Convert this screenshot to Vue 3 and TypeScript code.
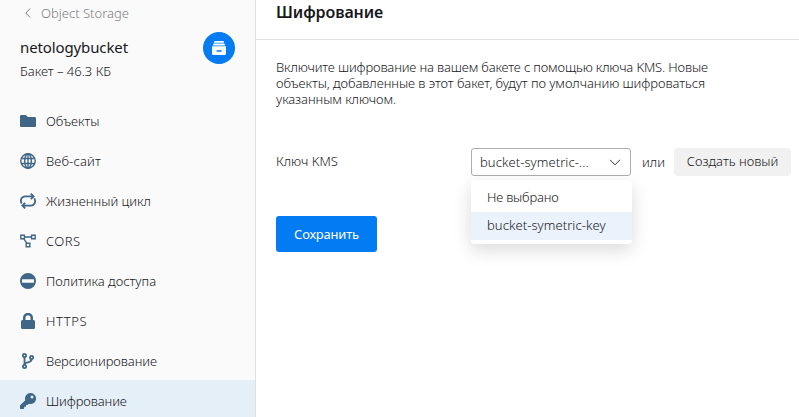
<script setup lang="ts">
import { computed, ref } from 'vue'

interface NavItem {
  id: string
  label: string
}

const navItems: NavItem[] = [
  { id: 'objects', label: 'Объекты' },
  { id: 'website', label: 'Веб-сайт' },
  { id: 'lifecycle', label: 'Жизненный цикл' },
  { id: 'cors', label: 'CORS' },
  { id: 'policy', label: 'Политика доступа' },
  { id: 'https', label: 'HTTPS' },
  { id: 'versioning', label: 'Версионирование' },
  { id: 'encryption', label: 'Шифрование' },
]

const active = ref('encryption')
const open = ref(true)
const selectedKey = ref('bucket-symetric-key')
const keys: string[] = ['Не выбрано', 'bucket-symetric-key']

const maxValueLength = 16
const selectedLabel = computed(() =>
  selectedKey.value.length > maxValueLength
    ? `${selectedKey.value.slice(0, maxValueLength)}...`
    : selectedKey.value,
)

const description: string[] = [
  'Включите шифрование на вашем бакете с помощью ключа KMS. Новые',
  'объекты, добавленные в этот бакет, будут по умолчанию шифроваться',
  'указанным ключом.',
]

function choose(key: string): void {
  selectedKey.value = key
  open.value = false
}
</script>

<template>
  <div class="page">
    <aside class="sidebar">
      <a class="back">
        <svg class="back-icon" viewBox="0 0 6 10"><path d="M5.2 .5 .8 5l4.400 4.500" /></svg>
        <span class="back-text">Object Storage</span>
      </a>
      <div class="bucket">
        <div class="bucket-info">
          <div class="bucket-name">netologybucket</div>
          <div class="bucket-size">Бакет – 46.3 КБ</div>
        </div>
        <div class="bucket-badge">
          <svg width="14" height="14" viewBox="0 0 14 14">
            <path d="M2.400 0h9.200l.5 1.700H1.900zM1.500 2.500h11l.6 2H.9z" fill="#fff" />
            <path fill-rule="evenodd" d="M0 5.300h14v7.500a1.200 1.200 0 0 1-1.200 1.200H1.200A1.200 1.200 0 0 1 0 12.800zM4.600 9.300v1.500h5V9.300z" fill="#fff" />
          </svg>
        </div>
      </div>
      <nav class="nav">
        <a
          v-for="item in navItems"
          :key="item.id"
          class="nav-item"
          :class="[`nav-${item.id}`, { active: active === item.id }]"
          @click="active = item.id"
        >
          <svg class="nav-icon" viewBox="0 0 16 16">
            <path v-if="item.id === 'objects'" class="fill" d="M1.300 2h4.500l2 2h6.900A1.300 1.300 0 0 1 16 5.300v7.400a1.300 1.300 0 0 1-1.300 1.300H1.300A1.300 1.300 0 0 1 0 12.700V3.300A1.300 1.300 0 0 1 1.300 2z" />
            <g v-else-if="item.id === 'website'" class="line">
              <circle cx="8" cy="8" r="7.200" />
              <ellipse cx="8" cy="8" rx="3.300" ry="7.200" />
              <path d="M8 .8v14.400M1.300 5.500h13.400M1.300 10.500h13.400" />
            </g>
            <g v-else-if="item.id === 'lifecycle'" class="line thick">
              <path d="M1.700 10.600C-.2 7 1.600 3.400 5 3.400h8M14.300 5.400c1.900 3.600.1 7.200-3.300 7.200H3" />
              <path d="m10.800.6 2.800 2.800-2.800 2.800M5.200 9.800l-2.800 2.800 2.800 2.800" />
            </g>
            <g v-else-if="item.id === 'cors'" class="line">
              <path d="M.8 2.300h3.600v3.500H.8zM11.600 2.300h3.600v3.500h-3.600zM6.200 10.200h3.600v3.500H6.200zM4.400 4h7.200M3.700 5.800l3.200 4.400" />
            </g>
            <path v-else-if="item.id === 'policy'" class="fill" d="M8 0a8 8 0 1 1 0 16A8 8 0 0 1 8 0zM2.600 6.200a.6.6 0 0 0-.6.6v2.300c0 .4.200.6.600.6h10.800c.4 0 .6-.2.600-.6V6.800c0-.4-.2-.6-.6-.6z" />
            <path v-else-if="item.id === 'https'" class="fill" d="M2.500 7H3V4.800a5 5 0 0 1 10 0V7h.5A1.500 1.500 0 0 1 15 8.500v6a1.500 1.500 0 0 1-1.500 1.500h-11A1.500 1.500 0 0 1 1 14.500v-6A1.500 1.500 0 0 1 2.500 7zM5.500 7h5V4.800a2.500 2.500 0 0 0-5 0z" />
            <g v-else-if="item.id === 'versioning'" class="line thick">
              <circle cx="4.500" cy="2.500" r="1.600" />
              <circle cx="4.500" cy="13.500" r="1.600" />
              <circle cx="11.600" cy="4.500" r="1.600" />
              <path d="M4.500 4.100v7.800M11.600 6.100c0 3.300-2.600 2.900-4.900 3.500-1.300.3-2.200.9-2.200 2.300" />
            </g>
            <path v-else class="fill" d="M10.500 0a5.500 5.500 0 1 1-1.700 10.700L7.500 12H6v1.800H4.200v1.500l-.7.700H.7a.7.700 0 0 1-.7-.7v-2.800l5.300-5.300A5.500 5.500 0 0 1 10.500 0zM12 2.500a1.500 1.500 0 1 0 0 3 1.500 1.500 0 0 0 0-3z" />
          </svg>
          <span class="nav-label">{{ item.label }}</span>
        </a>
      </nav>
    </aside>

    <main class="main">
      <header class="header"><h1 class="title">Шифрование</h1></header>
      <section class="content">
        <p class="description">
          <span v-for="(line, i) in description" :key="i" class="line-text" :class="`row-${i}`">{{ line }}</span>
        </p>
        <div class="field">
          <label class="field-label">Ключ KMS</label>
          <div class="select">
            <button class="select-control" type="button" @click="open = !open">
              <span class="select-value">{{ selectedLabel }}</span>
              <svg class="chevron" viewBox="0 0 12 7"><path d="m1 .8 5 5 5-5" /></svg>
            </button>
            <div v-if="open" class="menu">
              <div
                v-for="key in keys"
                :key="key"
                class="option"
                :class="{ chosen: key === selectedKey }"
                @click="choose(key)"
              >{{ key }}</div>
            </div>
          </div>
          <span class="or">или</span>
          <button class="create" type="button">Создать новый</button>
        </div>
        <button class="save" type="button">Сохранить</button>
      </section>
    </main>
  </div>
</template>

<style>
body {
  margin: 0;
  overflow: hidden;
}
</style>

<style scoped>
.page {
  display: flex;
  width: 100%;
  height: 417px;
  overflow: hidden;
  background: #fff;
  color: #17181b;
  font: 350 13px/16px "Noto Sans", "Open Sans", sans-serif;
  letter-spacing: 0;
  white-space: nowrap;
}
button {
  font: inherit;
  color: inherit;
  border: 0;
  margin: 0;
  padding: 0;
  letter-spacing: inherit;
}
.sidebar {
  box-sizing: border-box;
  flex: none;
  width: 256px;
  height: 417px;
  overflow: hidden;
  background: #fafafa;
  border-right: 1px solid #e0e0e0;
}
.back {
  display: flex;
  align-items: center;
  height: 25px;
  padding-left: 25px;
  color: #7d7d80;
}
.back-icon {
  width: 6px;
  height: 10px;
  margin-right: 10px;
  fill: none;
  stroke: #77787b;
  stroke-width: 1;
}
.bucket {
  display: flex;
  justify-content: space-between;
  height: 68px;
  padding: 7px 20px 0;
}
.bucket-name {
  padding-top: 5px;
  font-size: 15px;
  font-weight: 400;
  line-height: 20px;
  letter-spacing: -0.12px;
}
.bucket-size {
  padding-top: 6px;
  line-height: 16px;
}
.bucket-badge {
  display: flex;
  align-items: center;
  justify-content: center;
  width: 32px;
  height: 32px;
  border-radius: 50%;
  background: #027bf3;
}
.nav-item {
  display: flex;
  align-items: center;
  box-sizing: border-box;
  height: 40px;
  padding: 2px 0 0 20px;
}
.nav-item.active {
  background: #e5eff8;
}
.nav-website {
  letter-spacing: 0.13px;
}
.nav-cors {
  letter-spacing: 0.5px;
}
.nav-https {
  letter-spacing: 0.6px;
}
.nav-encryption {
  letter-spacing: -0.1px;
}
.nav-versioning {
  letter-spacing: -0.05px;
}
.nav-icon {
  width: 16px;
  height: 16px;
  margin-right: 10px;
}
.fill {
  fill: #3f6587;
  fill-rule: evenodd;
}
.line {
  fill: none;
  stroke: #3f6587;
  stroke-width: 1.4;
}
.thick {
  stroke-width: 1.8;
}
.main {
  flex: 1;
}
.header {
  height: 39px;
  padding-left: 20px;
  border-bottom: 1px solid #e1e1e1;
}
.title {
  margin: 0;
  font-size: 16px;
  line-height: 24px;
  font-weight: 600;
  letter-spacing: -0.1px;
}
.content {
  padding: 19px 0 0 20px;
}
.description {
  display: flex;
  flex-direction: column;
  align-items: flex-start;
  margin: 0;
}
.row-0 {
  letter-spacing: -0.145px;
}
.row-1 {
  letter-spacing: -0.06px;
}
.row-2 {
  letter-spacing: -0.07px;
}
.field {
  display: flex;
  align-items: center;
  height: 28px;
  padding-top: 41px;
}
.field-label {
  width: 195px;
  margin-top: -3px;
}
.select {
  position: relative;
  width: 160px;
  letter-spacing: 0.07px;
}
.select-control {
  display: flex;
  align-items: center;
  box-sizing: border-box;
  width: 160px;
  height: 28px;
  padding: 0 9px 1px 8px;
  border: 1px solid #adadad;
  border-radius: 3px;
  background: #fff;
}
.chevron {
  width: 12px;
  height: 7px;
  margin: 2px 0 0 auto;
  fill: none;
  stroke: #303135;
  stroke-width: 1;
}
.menu {
  position: absolute;
  top: 32px;
  left: 0;
  width: 161px;
  padding: 4px 0;
  border-radius: 4px;
  background: #fff;
  box-shadow: 0 6px 18px rgba(0, 0, 0, 0.15);
}
.option {
  height: 28px;
  padding-left: 16px;
  line-height: 27px;
}
.option:first-child {
  letter-spacing: -0.2px;
}
.option.chosen {
  background: #eaf3fc;
}
.or {
  width: 32px;
  margin-left: 11px;
}
.create {
  width: 117px;
  height: 28px;
  padding-bottom: 2px;
  border-radius: 4px;
  background: #f1f1f1;
}
.save {
  display: block;
  width: 101px;
  height: 36px;
  margin-top: 40px;
  padding-bottom: 1px;
  border-radius: 3px;
  background: #027bf3;
  color: #fff;
  font-weight: 400;
  letter-spacing: -0.2px;
}
</style>
